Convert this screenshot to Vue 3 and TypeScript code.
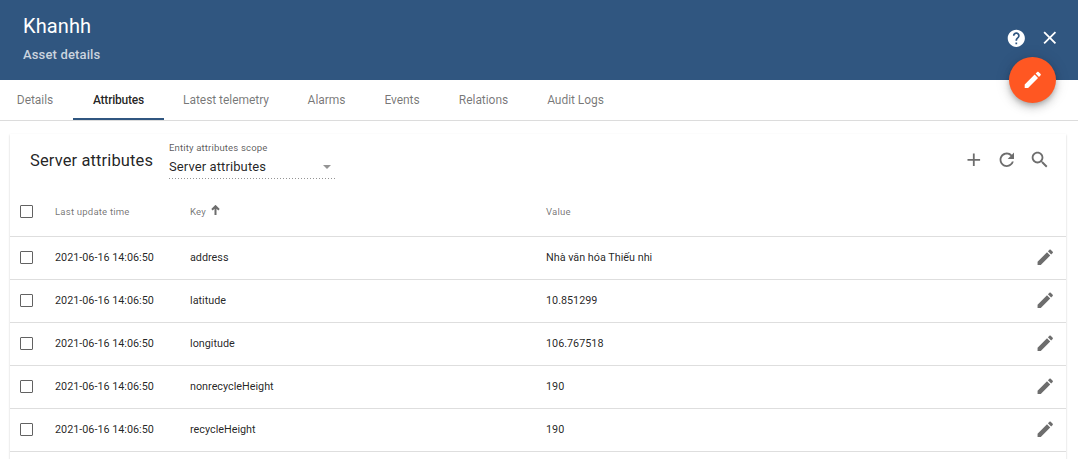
<script setup lang="ts">
interface Attribute {
  key: string
  value: string
  time: string
}

const tabs: { label: string; cls: string }[] = [
  { label: 'Details', cls: 'details' },
  { label: 'Attributes', cls: 'attributes' },
  { label: 'Latest telemetry', cls: 'telemetry' },
  { label: 'Alarms', cls: 'alarms' },
  { label: 'Events', cls: 'events' },
  { label: 'Relations', cls: 'relations' },
  { label: 'Audit Logs', cls: 'audit' },
]
const activeTab = 'Attributes'

const time = '2021-06-16 14:06:50'
const rows: Attribute[] = [
  { key: 'address', value: 'Nhà văn hóa Thiếu nhi', time },
  { key: 'latitude', value: '10.851299', time },
  { key: 'longitude', value: '106.767518', time },
  { key: 'nonrecycleHeight', value: '190', time },
  { key: 'recycleHeight', value: '190', time },
]

const editPath =
  'M3 17.25V21h3.75L17.81 9.94l-3.75-3.75L3 17.25zM20.71 7.04c.39-.39.39-1.02 0-1.41l-2.34-2.34c-.39-.39-1.02-.39-1.41 0l-1.83 1.83 3.75 3.75 1.83-1.83z'
</script>

<template>
  <div class="panel">
    <header class="toolbar">
      <div class="titles">
        <div class="title">Khanhh</div>
        <div class="subtitle">Asset details</div>
      </div>
      <div class="toolbar-actions">
        <svg class="icon help" viewBox="0 0 24 24"><path d="M12 2C6.48 2 2 6.48 2 12s4.48 10 10 10 10-4.48 10-10S17.52 2 12 2zm1 17h-2v-2h2v2zm2.07-7.75l-.9.92C13.45 12.9 13 13.5 13 15h-2v-.5c0-1.1.45-2.1 1.17-2.83l1.24-1.26c.37-.36.59-.86.59-1.41 0-1.1-.9-2-2-2s-2 .9-2 2H8c0-2.21 1.79-4 4-4s4 1.79 4 4c0 .88-.36 1.68-.93 2.25z" /></svg>
        <svg class="icon" viewBox="0 0 24 24"><path d="M19 6.41L17.59 5 12 10.59 6.41 5 5 6.41 10.59 12 5 17.59 6.41 19 12 13.41 17.59 19 19 17.59 13.41 12z" /></svg>
      </div>
      <button class="fab"><svg class="icon" viewBox="0 0 24 24"><path :d="editPath" /></svg></button>
    </header>

    <nav class="tabs">
      <div v-for="t in tabs" :key="t.label" class="tab" :class="[t.cls, { active: t.label === activeTab }]">{{ t.label }}</div>
    </nav>

    <section class="card">
      <div class="card-head">
        <div class="card-title">Server attributes</div>
        <div class="scope">
          <div class="scope-label">Entity attributes scope</div>
          <div class="scope-value"><span>Server attributes</span><i class="caret"></i></div>
          <div class="scope-line"></div>
        </div>
        <div class="card-actions">
          <svg class="icon" viewBox="0 0 24 24"><path d="M19 13h-6v6h-2v-6H5v-2h6V5h2v6h6v2z" /></svg>
          <svg class="icon" viewBox="0 0 24 24"><path d="M17.65 6.35C16.2 4.9 14.21 4 12 4c-4.42 0-7.99 3.58-7.99 8s3.57 8 7.99 8c3.73 0 6.84-2.55 7.73-6h-2.08c-.82 2.33-3.04 4-5.65 4-3.31 0-6-2.69-6-6s2.69-6 6-6c1.66 0 3.14.69 4.22 1.78L13 11h7V4l-2.35 2.35z" /></svg>
          <svg class="icon" viewBox="0 0 24 24"><path d="M15.5 14h-.79l-.28-.27C15.41 12.59 16 11.11 16 9.5 16 5.91 13.09 3 9.5 3S3 5.91 3 9.5 5.91 16 9.5 16c1.61 0 3.09-.59 4.23-1.57l.27.28v.79l5 4.99L20.49 19l-4.99-5zm-6 0C7.01 14 5 11.99 5 9.5S7.01 5 9.5 5 14 7.01 14 9.5 11.99 14 9.5 14z" /></svg>
        </div>
      </div>

      <div class="row head">
        <span class="check"></span>
        <span class="h-time">Last update time</span>
        <span class="h-key">Key<svg class="sort" viewBox="0 0 9 10"><path d="M4.5 1V10M1 4.7L4.5 1.2L8 4.7" /></svg></span>
        <span class="h-value">Value</span>
        <span></span>
      </div>
      <div v-for="r in rows" :key="r.key" class="row">
        <span class="check"></span>
        <span class="time">{{ r.time }}</span>
        <span>{{ r.key }}</span>
        <span>{{ r.value }}</span>
        <svg class="icon edit" viewBox="0 0 24 24"><path :d="editPath" /></svg>
      </div>
    </section>
  </div>
</template>

<style>
body {
  margin: 0;
  overflow: hidden;
}
</style>

<style scoped>
.panel {
  width: 1078px;
  height: 459px;
  overflow: hidden;
  background: #fff;
  font-family: Roboto, "Liberation Sans", sans-serif;
  color: rgba(0, 0, 0, 0.87);
}
.icon {
  display: block;
  flex: none;
  width: 21.6px;
  height: 21.6px;
  fill: currentColor;
}
.toolbar {
  position: relative;
  display: flex;
  justify-content: space-between;
  box-sizing: border-box;
  height: 80px;
  padding: 14px 17.5px 0 23px;
  background: #305680;
  color: #fff;
}
.title {
  font-size: 20px;
  line-height: 25px;
  letter-spacing: 0.1px;
}
.subtitle {
  margin-top: 8px;
  font-size: 13px;
  font-weight: 500;
  line-height: 16px;
  letter-spacing: 0.15px;
  color: rgba(255, 255, 255, 0.75);
}
.toolbar-actions {
  display: flex;
  align-items: center;
  gap: 12px;
  height: 48px;
}
.toolbar-actions .help {
  width: 20.6px;
  height: 20.6px;
}
.fab {
  position: absolute;
  z-index: 2;
  right: 22px;
  bottom: -23px;
  display: flex;
  align-items: center;
  justify-content: center;
  width: 47px;
  height: 46px;
  padding: 0;
  border: 0;
  border-radius: 50%;
  background: #ff5722;
  color: #fff;
  box-shadow: 0 3px 5px -1px rgba(0, 0, 0, 0.2), 0 5px 9px rgba(0, 0, 0, 0.14), 0 1px 16px rgba(0, 0, 0, 0.12);
}
.tabs {
  display: flex;
  box-sizing: border-box;
  height: 41px;
  border-bottom: 1px solid #dcdcdc;
}
.tab {
  box-sizing: border-box;
  height: 40px;
  text-align: center;
  font-size: 12px;
  line-height: 40px;
  letter-spacing: -0.05px;
  white-space: nowrap;
  color: rgba(0, 0, 0, 0.55);
}
.details { width: 73px; padding-right: 3px; }
.attributes { width: 91px; }
.telemetry { width: 124px; }
.alarms { width: 77px; }
.events { width: 74px; }
.relations { width: 89px; }
.audit { width: 95px; }
.tab.active {
  border-bottom: 2px solid #305680;
  font-weight: 500;
  letter-spacing: -0.2px;
  color: rgba(0, 0, 0, 0.87);
}
.card {
  width: 1056px;
  height: 340px;
  margin: 13px 0 0 10px;
  background: #fff;
  box-shadow: 0 1px 2px rgba(0, 0, 0, 0.2);
}
.card-head {
  display: flex;
  height: 53px;
}
.card-title {
  width: 139px;
  padding-left: 20px;
  font-size: 16.5px;
  line-height: 53px;
  letter-spacing: 0.12px;
  white-space: nowrap;
}
.scope {
  width: 166px;
  padding-top: 7px;
}
.scope-label {
  font-size: 9.6px;
  line-height: 14px;
  letter-spacing: 0.13px;
  color: rgba(0, 0, 0, 0.66);
}
.scope-value {
  display: flex;
  align-items: center;
  justify-content: space-between;
  padding-right: 4px;
  font-size: 13px;
  line-height: 23px;
  letter-spacing: 0.1px;
}
.caret {
  border: 4.5px solid transparent;
  border-top-color: rgba(0, 0, 0, 0.42);
  border-bottom: 0;
}
.scope-line {
  height: 1px;
  background: repeating-linear-gradient(90deg, rgba(0, 0, 0, 0.42) 0 1px, transparent 1px 3px);
}
.card-actions {
  display: flex;
  align-items: center;
  gap: 11.4px;
  height: 52px;
  margin-left: auto;
  padding-right: 15.5px;
  color: #6d6d6d;
}
.row {
  display: grid;
  grid-template-columns: 35px 135px 356px 1fr 31px;
  align-items: center;
  box-sizing: border-box;
  height: 43px;
  padding-left: 10px;
  border-bottom: 1px solid #dedede;
  font-size: 10.8px;
  line-height: 14px;
  white-space: nowrap;
}
.head {
  height: 50px;
  font-size: 9.6px;
  letter-spacing: 0.18px;
  color: rgba(0, 0, 0, 0.56);
}
.check {
  box-sizing: border-box;
  width: 13px;
  height: 13px;
  margin-bottom: 1px;
  border: 1px solid #626262;
  border-radius: 1px;
}
.head .check {
  margin-bottom: 0;
}
.edit {
  width: 20.5px;
  height: 20.5px;
  margin-bottom: 1px;
  color: #6d6d6d;
}
.h-key {
  display: flex;
  align-items: center;
}
.sort {
  width: 9px;
  height: 10px;
  margin: -3px 0 0 5px;
  fill: none;
  stroke: #6d6d6d;
  stroke-width: 2;
}
</style>
